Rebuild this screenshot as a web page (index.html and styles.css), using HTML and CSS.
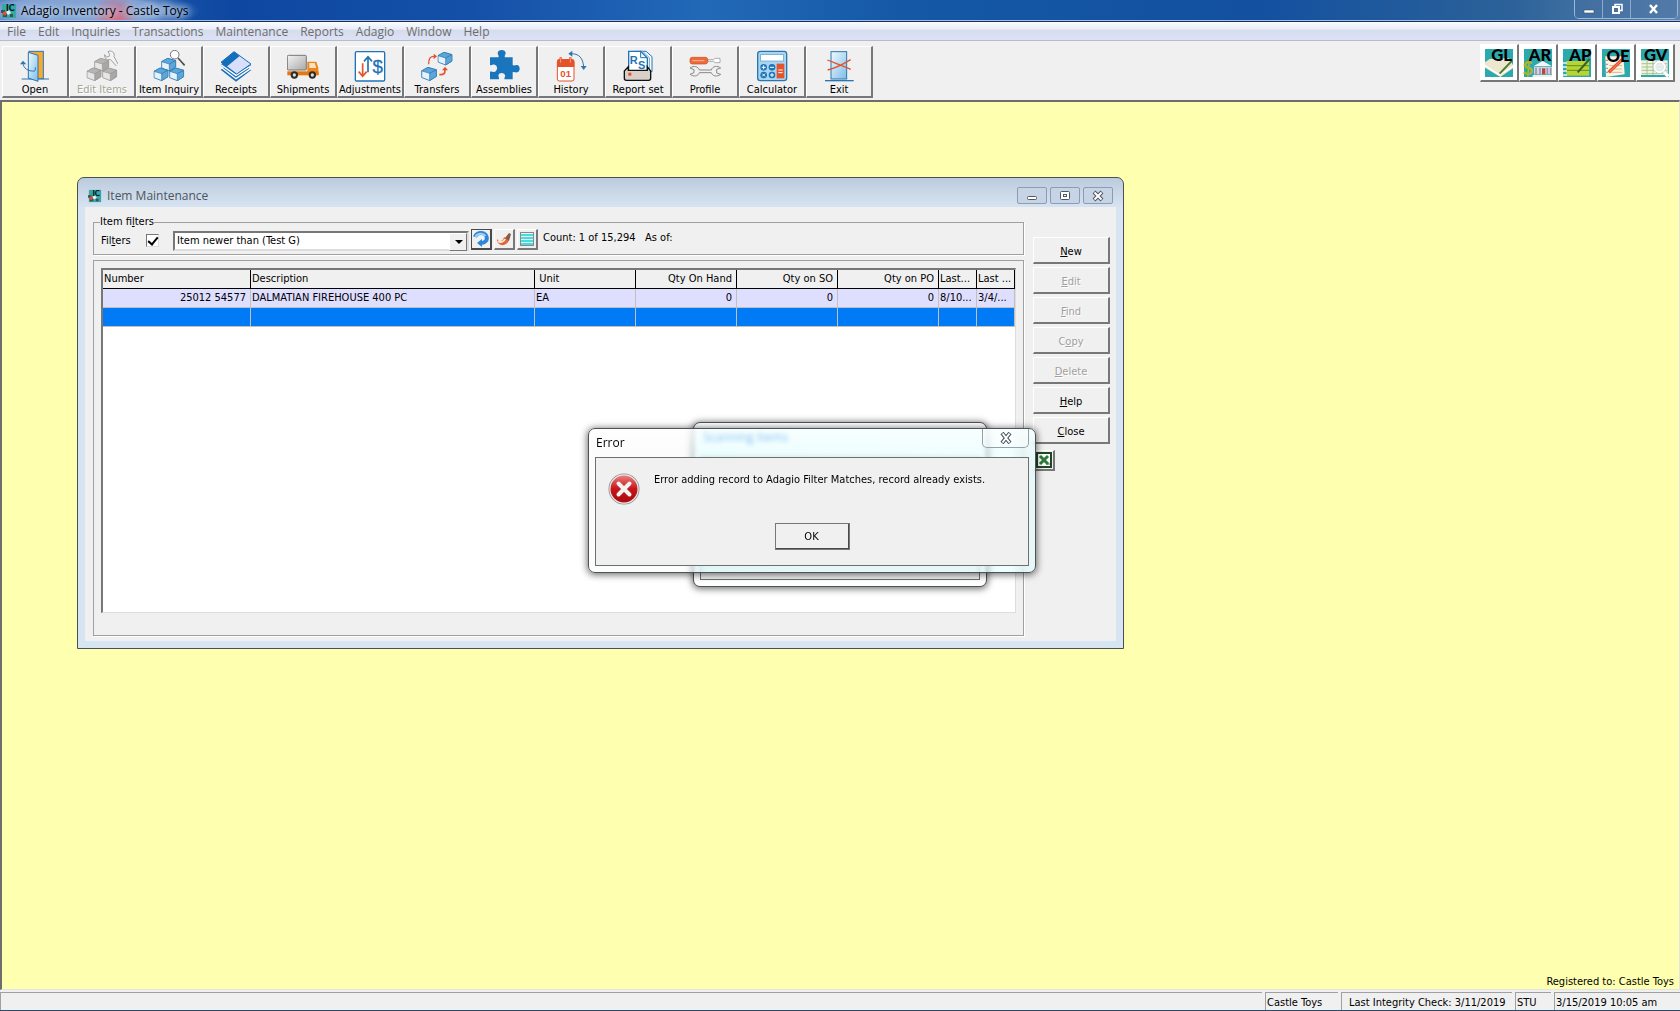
FILE: index.html
```html
<!DOCTYPE html>
<html lang="en">
<head>
    <meta charset="UTF-8">
    <meta name="viewport" content="width=device-width, initial-scale=1.0">
    <title>Adagio Inventory - Castle Toys</title>
    <link rel="stylesheet" href="styles.css">
</head>
<body>
    <!-- shared shapes -->
    <svg class="defs" width="0" height="0" aria-hidden="true">
        <defs>
            <linearGradient id="glass" x1="0" y1="0" x2="1" y2="1">
                <stop offset="0" stop-color="#f2faff"/>
                <stop offset="1" stop-color="#7cbde8"/>
            </linearGradient>
            <linearGradient id="red" x1="0" y1="0" x2="0" y2="1">
                <stop offset="0" stop-color="#e8807c"/>
                <stop offset=".5" stop-color="#c8141a"/>
                <stop offset="1" stop-color="#a80a10"/>
            </linearGradient>
            <linearGradient id="truck" x1="0" y1="0" x2="1" y2="1">
                <stop offset="0" stop-color="#f4f4f4"/>
                <stop offset="1" stop-color="#a8a8a8"/>
            </linearGradient>
            <symbol id="cube" viewBox="0 0 46 42">
                <path d="M2 12 20 2 44 9 44 28 25 40 2 31Z" fill="#e4f2fb" stroke="#2b76b0" stroke-width="2.5" stroke-linejoin="round"/>
                <path d="M2 12 20 2 44 9 25 19Z" fill="#5aa7dc" stroke="#2b76b0" stroke-width="2"/>
                <path d="M25 19 44 9 44 28 25 40Z" fill="#5ea6d8" stroke="#2b76b0" stroke-width="2"/>
            </symbol>
            <symbol id="cube-gray" viewBox="0 0 46 42">
                <path d="M2 12 20 2 44 9 44 28 25 40 2 31Z" fill="#e6e6e6" stroke="#999" stroke-width="2.5" stroke-linejoin="round"/>
                <path d="M2 12 20 2 44 9 25 19Z" fill="#b8b4b2" stroke="#999" stroke-width="2"/>
                <path d="M25 19 44 9 44 28 25 40Z" fill="#aaa6a4" stroke="#999" stroke-width="2"/>
            </symbol>
            <symbol id="ic" viewBox="0 0 16 16">
                <rect x="1" y="1" width="14" height="14" fill="#35a9a6"/>
                <path d="M0 7h4v3H0zM2 11h4v3H2zM9 11h3v3H9z" fill="#3d4f58"/>
                <path d="M5 9l3-2 2 3-3 2z" fill="#e8f4f4"/>
                <circle cx="3.5" cy="10.500" r="2" fill="#d8502f"/>
                <text class="ic-text" x="5" y="8">IC</text>
            </symbol>
        </defs>
    </svg>

    <header class="titlebar">
        <svg class="app-icon" width="16" height="16"><use href="#ic"/></svg>
        <h1 class="titlebar-text">Adagio Inventory - Castle Toys</h1>
        <div class="window-controls">
            <button type="button" aria-label="Minimize"><svg width="14" height="12"><rect x="2" y="7" width="10" height="3" fill="#fff" stroke="#38506e" stroke-width=".6"/></svg></button>
            <button type="button" aria-label="Restore"><svg width="14" height="12"><path d="M5 3V1.500h7v6h-2" fill="none" stroke="#fff" stroke-width="1.500"/><rect x="3" y="4" width="6" height="6" fill="none" stroke="#fff" stroke-width="2"/></svg></button>
            <button type="button" class="wide" aria-label="Close"><svg width="14" height="12"><path d="M3 2l7 8M10 2l-7 8" stroke="#fff" stroke-width="2.400"/></svg></button>
        </div>
    </header>

    <nav class="menubar">
        <button type="button">File</button>
        <button type="button">Edit</button>
        <button type="button">Inquiries</button>
        <button type="button">Transactions</button>
        <button type="button">Maintenance</button>
        <button type="button">Reports</button>
        <button type="button">Adagio</button>
        <button type="button">Window</button>
        <button type="button">Help</button>
    </nav>

    <div class="toolbar">
        <div class="tools">
            <button type="button" class="tool">
                <svg viewBox="0 0 96 96">
                    <path d="M8 87h82" stroke="#2b76b0" stroke-width="3"/>
                    <rect x="30" y="4" width="43" height="82" fill="#f6a935" stroke="#2b76b0" stroke-width="3"/>
                    <path d="M28 7 57 16V94L28 84Z" fill="url(#glass)" stroke="#2b76b0" stroke-width="3"/>
                    <path d="M49 52v9" stroke="#2b76b0" stroke-width="3"/>
                    <path d="M12 37c0 18 15 28 36 26" fill="none" stroke="#2b76b0" stroke-width="3"/>
                    <path d="M3 43 12 32 22 43Z" fill="#2b76b0"/>
                </svg>
                <span>Open</span>
            </button>
            <button type="button" class="tool" disabled>
                <svg viewBox="0 0 96 96">
                    <use href="#cube-gray" x="23" y="23" width="48" height="42"/>
                    <use href="#cube-gray" x="1" y="52" width="46" height="42"/>
                    <use href="#cube-gray" x="48" y="52" width="46" height="42"/>
                    <path d="M66 5c10-6 22 3 18 15l14 25M66 5l5 8-2 7-8 1-5-7c-1 12 8 18 17 14l18 20" fill="#f4f4f4" stroke="#a0a0a0" stroke-width="3"/>
                </svg>
                <span>Edit Items</span>
            </button>
            <button type="button" class="tool">
                <svg viewBox="0 0 96 96">
                    <use href="#cube" x="23" y="23" width="48" height="42"/>
                    <use href="#cube" x="1" y="52" width="46" height="42"/>
                    <use href="#cube" x="48" y="52" width="46" height="42"/>
                    <path d="M75 24l20 22" stroke="#554f4d" stroke-width="5"/>
                    <circle cx="65" cy="14" r="13" fill="#fff" stroke="#777" stroke-width="3"/>
                </svg>
                <span>Item Inquiry</span>
            </button>
            <button type="button" class="tool">
                <svg viewBox="0 0 96 96">
                    <path d="M2 59 46 28 94 60 48 95Z" fill="#1b70b8"/>
                    <path d="M5 53 48 86 93 55" fill="none" stroke="#fff" stroke-width="4"/>
                    <path d="M2 46 44 6 94 48 49 80Z" fill="#1b70b8"/>
                    <path d="M4 45 48 76 92 48" fill="none" stroke="#fff" stroke-width="4"/>
                    <path d="M3 37 42 5 93 42 50 72Z" fill="#d9defb" stroke="#1b70b8" stroke-width="3"/>
                    <path d="M3 37 42 5 59 18 20 50Z" fill="#136fba"/>
                </svg>
                <span>Receipts</span>
            </button>
            <button type="button" class="tool">
                <svg viewBox="0 0 96 96">
                    <rect x="1" y="16" width="57" height="44" rx="3" fill="url(#truck)" stroke="#777" stroke-width="3"/>
                    <path d="M61 35h27l6 18v22H61Z" fill="#ef861c"/>
                    <path d="M67 39h16l5 15H67Z" fill="#f7e3c3"/>
                    <path d="M1 64h94v12H1Z" fill="#e3780c"/>
                    <circle cx="22" cy="75" r="11" fill="#2b2b2b"/><circle cx="22" cy="75" r="5" fill="#ddd"/>
                    <circle cx="76" cy="75" r="11" fill="#2b2b2b"/><circle cx="76" cy="75" r="5" fill="#ddd"/>
                </svg>
                <span>Shipments</span>
            </button>
            <button type="button" class="tool">
                <svg viewBox="0 0 96 96">
                    <rect x="4" y="5" width="88" height="88" rx="4" fill="#fff" stroke="#1d74b8" stroke-width="4"/>
                    <path d="M42 67V22M30 34 42 20 54 34" fill="none" stroke="#1d74b8" stroke-width="5"/>
                    <path d="M26 40v38M14 65 26 79 38 65" fill="none" stroke="#e4532b" stroke-width="5"/>
                    <text x="71" y="69" font-size="56" text-anchor="middle" fill="#1d74b8" stroke="#1d74b8" stroke-width="1">$</text>
                </svg>
                <span>Adjustments</span>
            </button>
            <button type="button" class="tool">
                <svg viewBox="0 0 96 96">
                    <use href="#cube" x="49" y="3" width="46" height="46"/>
                    <use href="#cube" x="0" y="49" width="48" height="46"/>
                    <path d="M55 74c15 1 17-4 17-15" fill="none" stroke="#e4532b" stroke-width="5"/>
                    <path d="M63 61 72 50 81 61Z" fill="#e4532b"/>
                    <path d="M23 43c0-19 5-24 17-24" fill="none" stroke="#e4532b" stroke-width="4"/>
                    <path d="M38 11 48 19 38 28Z" fill="#e4532b"/>
                </svg>
                <span>Transfers</span>
            </button>
            <button type="button" class="tool">
                <svg viewBox="0 0 96 96">
                    <path d="M6 22h25c3-4-2-8-2-12 0-13 24-13 24 0 0 4-5 8-2 12h23v23c6 4 10-3 16 1 8 6 6 19-3 21-6 1-8-3-13 0v21H50c-3-4 3-7 1-13-3-9-19-8-20 1 0 5 4 8 1 12H6V65c6-3 9 3 15 0 9-5 8-19-1-21-6-1-9 4-14 1Z" fill="#1b75bc"/>
                </svg>
                <span>Assemblies</span>
            </button>
            <button type="button" class="tool">
                <svg viewBox="0 0 96 96">
                    <rect x="7" y="30" width="50" height="63" rx="6" fill="#fff" stroke="#e4532b" stroke-width="3"/>
                    <path d="M6 51V34q0-7 7-7h38q7 0 7 7v17Z" fill="#e4532b"/>
                    <path d="M17 22v15M46 22v15" stroke="#e4532b" stroke-width="7"/>
                    <path d="M17 24v14M46 24v14" stroke="#f9c6b5" stroke-width="2"/>
                    <text x="32" y="82" font-size="29" font-weight="700" text-anchor="middle" fill="#e4532b">01</text>
                    <path d="M46 11c26-1 38 13 40 40" fill="none" stroke="#2b76b0" stroke-width="3"/>
                    <path d="M52 2 40 11 52 20ZM77 48h18L86 60Z" fill="#2b76b0"/>
                </svg>
                <span>History</span>
            </button>
            <button type="button" class="tool">
                <svg viewBox="0 0 96 96">
                    <path d="M54 4h18l18 16v45H54Z" fill="#fff" stroke="#1d74b8" stroke-width="3"/>
                    <path d="M34 4h28l20 19v45H34Z" fill="#fff" stroke="#1d74b8" stroke-width="2"/>
                    <path d="M20 4h36l20 20v40H20Z" fill="#fff" stroke="#1d74b8" stroke-width="4"/>
                    <path d="M56 5v18h19" fill="none" stroke="#1d74b8" stroke-width="3"/>
                    <path d="M19 50 7 63v22q0 6 6 6h67q6 0 6-6V63L76 50v11H19Z" fill="#d8cfc8" stroke="#111" stroke-width="4"/>
                    <text x="23" y="43" font-size="33" font-weight="700" fill="#1d74b8">R</text>
                    <text x="48" y="57" font-size="33" font-weight="700" fill="#1d74b8">S</text>
                    <rect x="19" y="68" width="9" height="9" fill="#e4532b"/>
                </svg>
                <span>Report set</span>
            </button>
            <button type="button" class="tool">
                <svg viewBox="0 0 96 96">
                    <path d="M56 29h18l4-4h15v13H78l-4-4H56Z" fill="#fff" stroke="#888" stroke-width="2"/>
                    <rect x="3" y="22" width="53" height="20" rx="7" fill="#ef6a3a" stroke="#c94b1d" stroke-width="2"/>
                    <path d="M10 32h36" stroke="#f9b698" stroke-width="3"/>
                    <path d="M3 54c12-8 24-5 28 6h36c4-12 18-14 28-6l-12 4v11l12 4c-12 9-25 5-28-5H31c-4 11-17 13-28 5l12-5V59Z" fill="#f1f1f1" stroke="#888" stroke-width="3"/>
                </svg>
                <span>Profile</span>
            </button>
            <button type="button" class="tool">
                <svg viewBox="0 0 96 96">
                    <rect x="5" y="4" width="87" height="88" rx="8" fill="#a8d5ef" stroke="#2b76b0" stroke-width="4"/>
                    <rect x="14" y="14" width="68" height="19" fill="#fff" stroke="#5c9cc8" stroke-width="2"/>
                    <g fill="#1d74b8"><circle cx="23" cy="52" r="10"/><circle cx="48" cy="52" r="10"/><circle cx="23" cy="75" r="10"/><circle cx="48" cy="75" r="10"/></g>
                    <path d="M17 52h12M23 46v12M42 52h12M19 71l8 8M27 71l-8 8M42 75h12M48 69v12" stroke="#fff" stroke-width="3"/>
                    <rect x="62" y="41" width="23" height="44" fill="#e4532b"/>
                    <path d="M67 60h13M67 68h13" stroke="#fff" stroke-width="3"/>
                </svg>
                <span>Calculator</span>
            </button>
            <button type="button" class="tool">
                <svg viewBox="0 0 96 96">
                    <path d="M6 92h86" stroke="#2b76b0" stroke-width="4"/>
                    <rect x="24" y="5" width="47" height="82" fill="url(#glass)" stroke="#2b76b0" stroke-width="3"/>
                    <path d="M13 30c20 8 44 16 70 28M14 60c22-5 46-17 69-31" fill="none" stroke="#e4532b" stroke-width="4"/>
                </svg>
                <span>Exit</span>
            </button>
        </div>
        <div class="modules">
            <button type="button" class="module" aria-label="General Ledger">
                <svg viewBox="0 0 84 84">
                    <rect width="84" height="84" fill="#2ba9ad"/>
                    <path d="M0 40 14 30 72 28 84 48V58L46 84 0 56Z" fill="#ece8cf"/>
                    <path d="M0 50 44 78 84 52" fill="none" stroke="#fff" stroke-width="4"/>
                    <path d="M44 74 82 34" stroke="#4b7a2c" stroke-width="6"/>
                    <text x="50" y="36" text-anchor="middle">GL</text>
                </svg>
            </button>
            <button type="button" class="module" aria-label="Accounts Receivable">
                <svg viewBox="0 0 84 84">
                    <rect width="84" height="84" fill="#2ba9ad"/>
                    <path d="M28 52 56 36 84 52Z" fill="#f4f4f6"/>
                    <path d="M30 76V54h54v22Z" fill="#d6d4de"/>
                    <path d="M36 56v20M48 56v20M70 56v20M80 56v20" stroke="#9b93b4" stroke-width="5"/>
                    <path d="M54 58h10v18H54Z" fill="#b5483c"/>
                    <path d="M26 78h58v6H26Z" fill="#eee"/>
                    <text class="dollar" x="12" y="78" text-anchor="middle">$</text>
                    <text x="48" y="36" text-anchor="middle">AR</text>
                </svg>
            </button>
            <button type="button" class="module" aria-label="Accounts Payable">
                <svg viewBox="0 0 84 84">
                    <rect width="84" height="84" fill="#2ba9ad"/>
                    <rect x="10" y="36" width="68" height="44" fill="#b7d433"/>
                    <path d="M10 50h68M10 64h68" stroke="#6d9b24" stroke-width="4"/>
                    <path d="M0 42h12M0 54h12M0 66h12M0 78h12" stroke="#e8f6f6" stroke-width="4"/>
                    <path d="M44 70 80 30" stroke="#3f5d26" stroke-width="6"/>
                    <text x="52" y="36" text-anchor="middle">AP</text>
                </svg>
            </button>
            <button type="button" class="module" aria-label="Order Entry">
                <svg viewBox="0 0 84 84">
                    <rect width="84" height="84" fill="#2ba9ad"/>
                    <path d="M10 22h54l4 54-56 8Z" fill="#fbf4e6"/>
                    <path d="M22 50h38M22 60h38M22 70h38" stroke="#e3b48f" stroke-width="3"/>
                    <path d="M8 34h10M8 46h10M8 58h10M8 70h10" stroke="#8fa6ac" stroke-width="4"/>
                    <path d="M20 70 60 32" stroke="#e2512b" stroke-width="10"/>
                    <path d="M24 67 58 34" stroke="#f8b59f" stroke-width="2"/>
                    <text x="48" y="38" text-anchor="middle">OE</text>
                </svg>
            </button>
            <button type="button" class="module" aria-label="GridView">
                <svg viewBox="0 0 84 84">
                    <rect width="84" height="84" fill="#2ba9ad"/>
                    <path d="M0 34h80v44H0Z" fill="#eef3e2"/>
                    <path d="M2 44h76M2 54h76M2 64h76M2 74h76M18 36v42M36 36v42" stroke="#a9c48c" stroke-width="3"/>
                    <path d="M68 68 82 82" stroke="#d4d8da" stroke-width="12"/>
                    <path d="M68 68 82 82" stroke="#fff" stroke-width="8"/>
                    <circle cx="56" cy="54" r="19" fill="none" stroke="#bcc4c8" stroke-width="3"/>
                    <circle cx="56" cy="54" r="16" fill="#e6edf2" fill-opacity=".85" stroke="#fff" stroke-width="5"/>
                    <text x="44" y="36" text-anchor="middle">GV</text>
                </svg>
            </button>
        </div>
    </div>

    <main class="workspace">
        <section class="window item-window">
            <div class="window-title">
                <svg width="14" height="14"><use href="#ic"/></svg>
                <h2>Item Maintenance</h2>
                <div class="window-buttons">
                    <button type="button" aria-label="Minimize"><svg width="14" height="12"><rect x="2.500" y="6.500" width="9" height="3" rx="1" fill="#fff" stroke="#4c5864"/></svg></button>
                    <button type="button" aria-label="Maximize"><svg width="14" height="12"><rect x="2.500" y="1.500" width="9" height="8" rx="1" fill="#fff" stroke="#4c5864"/><rect x="5.500" y="4.500" width="3" height="2" fill="#fff" stroke="#4c5864"/></svg></button>
                    <button type="button" aria-label="Close"><svg width="14" height="12"><path d="M3 2l8 8M11 2l-8 8" stroke="#4c5864" stroke-width="4"/><path d="M3.500 2.500l7 7M10.500 2.500l-7 7" stroke="#fff" stroke-width="2"/></svg></button>
                </div>
            </div>
            <div class="window-body">
                <div class="panels">
                    <fieldset class="filters">
                        <legend>Item fi<u>l</u>ters</legend>
                        <div class="filter-row">
                            <label for="use-filters">Fil<u>t</u>ers</label>
                            <input type="checkbox" id="use-filters" checked>
                            <div class="combo">
                                <select aria-label="Filter">
                                    <option>Item newer than (Test G)</option>
                                </select>
                            </div>
                            <button type="button" class="mini focused" aria-label="Refresh"><svg width="16" height="16"><path d="M2 6a6 5 0 1 1 7 6" fill="none" stroke="#2b86d8" stroke-width="4"/><path d="M2.500 6a5.500 4.500 0 0 1 10-1" fill="none" stroke="#9bd2f8" stroke-width="2"/><path d="M9 8v8l-5-4z" fill="#2b86d8"/></svg></button>
                            <button type="button" class="mini" aria-label="Clear filter"><svg width="16" height="16"><path d="M1 8c0 8 10 8 12 1L8 6c-1 5-5 5-7 2z" fill="#e0673c"/><path d="M2 10c2 2 6 1 7-2" stroke="#fbe3d6" stroke-width="2" fill="none"/><path d="M9 7l4-5 2 1-2 7z" fill="#8a5a44"/></svg></button>
                            <button type="button" class="mini" aria-label="Select all"><svg width="16" height="16"><path d="M2 4h12M2 7h12M2 10h12M2 13h12" stroke="#43dfe0" stroke-width="2"/><rect x="1.500" y="1.500" width="13" height="13" fill="none" stroke="#222" stroke-dasharray="1 1"/></svg></button>
                            <span class="count">Count: 1 of 15,294 &nbsp; As of:</span>
                        </div>
                    </fieldset>
                    <div class="grid-panel">
                        <div class="grid">
                            <table>
                                <colgroup>
                                    <col class="col-number">
                                    <col>
                                    <col class="col-qty">
                                    <col class="col-qty">
                                    <col class="col-qty">
                                    <col class="col-qty">
                                    <col class="col-last">
                                    <col class="col-last">
                                </colgroup>
                                <thead>
                                    <tr>
                                        <th>Number</th>
                                        <th>Description</th>
                                        <th>&nbsp;Unit</th>
                                        <th class="num">Qty On Hand</th>
                                        <th class="num">Qty on SO</th>
                                        <th class="num">Qty on PO</th>
                                        <th>Last...</th>
                                        <th>Last ...</th>
                                    </tr>
                                </thead>
                                <tbody>
                                    <tr>
                                        <td class="num">25012 54577</td>
                                        <td>DALMATIAN FIREHOUSE 400 PC</td>
                                        <td>EA</td>
                                        <td class="num">0</td>
                                        <td class="num">0</td>
                                        <td class="num">0</td>
                                        <td>8/10...</td>
                                        <td>3/4/...</td>
                                    </tr>
                                    <tr class="selected">
                                        <td></td><td></td><td></td><td></td><td></td><td></td><td></td><td></td>
                                    </tr>
                                </tbody>
                            </table>
                        </div>
                    </div>
                </div>
                <div class="actions">
                    <button type="button"><u>N</u>ew</button>
                    <button type="button" disabled><u>E</u>dit</button>
                    <button type="button" disabled><u>F</u>ind</button>
                    <button type="button" disabled>C<u>o</u>py</button>
                    <button type="button" disabled><u>D</u>elete</button>
                    <button type="button"><u>H</u>elp</button>
                    <button type="button"><u>C</u>lose</button>
                    <button type="button" class="mini excel" aria-label="Export to Excel"><svg width="16" height="16"><rect x="1" y="1" width="14" height="14" fill="#fff" stroke="#1d4a24" stroke-width="2"/><path d="M4 4l8 8M12 4l-8 8" stroke="#2f7a3c" stroke-width="3"/><path d="M10 12h4" stroke="#2f7a3c"/></svg></button>
                </div>
            </div>
        </section>

        <section class="dialog scan-dialog">
            <div class="scan-title">Scanning Items</div>
            <div class="dialog-body"></div>
        </section>

        <section class="dialog error-dialog" role="alertdialog" aria-labelledby="error-title">
            <div class="dialog-title">
                <h2 id="error-title">Error</h2>
                <button type="button" class="dialog-close" aria-label="Close"><svg width="14" height="12"><path d="M3 1l8 10M11 1l-8 10" stroke="#4c5560" stroke-width="4"/><path d="M3.500 1.500l7 9M10.500 1.500l-7 9" stroke="#fff" stroke-width="2"/></svg></button>
            </div>
            <div class="dialog-body">
                <div class="message">
                    <svg width="32" height="32" viewBox="0 0 32 32">
                        <circle cx="16" cy="16" r="15.500" fill="#8d8d8d"/>
                        <circle cx="16" cy="16" r="14.700" fill="#f0e8e8"/>
                        <circle cx="16" cy="16" r="13.500" fill="url(#red)"/>
                        <path d="M10.500 10.500l11 11M21.500 10.500l-11 11" stroke="#f2f2f2" stroke-width="4" stroke-linecap="round"/>
                    </svg>
                    <p>Error adding record to Adagio Filter Matches, record already exists.</p>
                </div>
                <button type="button" class="ok">OK</button>
            </div>
        </section>

        <p class="registered">Registered to: Castle Toys</p>
    </main>

    <footer class="statusbar">
        <span class="fill"></span>
        <span class="status-company">Castle Toys</span>
        <span class="status-check">Last Integrity Check: 3/11/2019</span>
        <span class="status-user">STU</span>
        <span class="status-time">3/15/2019 10:05 am</span>
    </footer>
</body>
</html>
```

FILE: styles.css
```css
* {
    box-sizing: border-box;
}
body {
    margin: 0;
    height: 100vh;
    display: flex;
    flex-direction: column;
    overflow: hidden;
    background: #f0f0f0;
    color: #000;
    font-family: "DejaVu Sans Condensed", "Noto Sans", sans-serif;
    font-size: 11px;
    line-height: 14px;
}
button, select, input {
    font: inherit;
    color: inherit;
    margin: 0;
    padding: 0;
}
h1, h2, p {
    margin: 0;
    font-size: 12px;
    font-weight: normal;
}
svg {
    display: block;
    flex: none;
}
.defs {
    position: absolute;
}
.ic-text {
    font: 900 9px Lato, sans-serif;
    fill: #0a1418;
}

/* main title bar */
.titlebar {
    flex: none;
    height: 22px;
    display: flex;
    align-items: center;
    gap: 4px;
    padding-left: 1px;
    border-bottom: 1px solid #17305c;
    box-shadow: inset 0 -1px #9fbce4;
    background:
        radial-gradient(circle at 115px 18px, rgba(232, 96, 112, 0.9), rgba(232, 96, 112, 0) 24px),
        radial-gradient(ellipse 120px 22px at 80px 11px, rgba(140, 170, 215, 0.9) 65%, rgba(140, 170, 215, 0)),
        linear-gradient(to right, #2a66b0, #0d47a1 14%, #1550a8 28%, #2269b8 42%, #1458a6 54%, #1350a0 75%, #2c6299 90%, #5b83ae);
}
.titlebar-text {
    flex: 1;
    font-family: "Open Sans", sans-serif;
    text-shadow: 0 0 6px #cfe0f6, 0 0 6px #cfe0f6;
}
.window-controls {
    align-self: flex-start;
    height: 19px;
    margin-right: 2px;
    display: flex;
    border: 1px solid #9fb6d2;
    border-top: 0;
    border-radius: 0 0 5px 5px;
}
.window-controls button {
    width: 28px;
    display: flex;
    align-items: center;
    justify-content: center;
    border: 0;
    border-right: 1px solid #8fa9c8;
    background: rgba(70, 110, 160, 0.4);
}
.window-controls .wide {
    width: 46px;
    border-right: 0;
}

/* menu */
.menubar {
    flex: none;
    height: 19px;
    display: flex;
    gap: 12px;
    padding: 2px 0 0 7px;
    border-bottom: 1px solid #b4bccf;
    background: linear-gradient(#fbfcfe, #e9edf7 40%, #d5dcee 45%, #dde3f4);
}
.menubar button {
    border: 0;
    background: none;
    color: #6d6d6d;
    font-family: "Open Sans", sans-serif;
    font-size: 12px;
}

/* toolbar */
.toolbar {
    flex: none;
    height: 59px;
    display: flex;
    justify-content: space-between;
    padding: 3px 5px 0 2px;
}
.tools {
    display: flex;
    padding-top: 2px;
}
.tool {
    width: 67px;
    height: 52px;
    display: flex;
    flex-direction: column;
    align-items: center;
    justify-content: flex-end;
    border: 1px solid #fff;
    border-right: 2px solid #777;
    border-bottom: 2px solid #777;
    background: #f0f0f0;
    white-space: nowrap;
}
.tool svg {
    width: 32px;
    height: 32px;
}
.tool span {
    padding-top: 2px;
    line-height: 12px;
}
.tool text {
    font-family: "Liberation Sans", sans-serif;
}
.tool:disabled {
    color: #a8a49a;
    text-shadow: 1px 1px #fff;
}
.modules {
    display: flex;
}
.module {
    width: 39px;
    height: 38px;
    padding: 0 4px;
    border: 1px solid #fff;
    border-right: 2px solid #777;
    border-bottom: 2px solid #777;
    background: #fff;
}
.module svg {
    width: 28px;
    height: 28px;
    overflow: visible;
}
.module text {
    font: 900 50px Lato, sans-serif;
}
.module .dollar {
    font-size: 54px;
    fill: #a8b52a;
}

/* desktop area */
.workspace {
    flex: 1;
    position: relative;
    border: 1px solid #e3e3e3;
    border-top: 2px solid #6d6d6d;
    border-left: 2px solid #6d6d6d;
    background: #ffffb0;
}
.registered {
    position: absolute;
    right: 5px;
    bottom: 0;
    font-size: 11px;
}

/* item maintenance window */
.window {
    position: absolute;
    border: 1px solid #4a4f57;
    border-radius: 7px 7px 0 0;
    background: linear-gradient(#bccbdd, #d7e4f2 30px);
    padding: 0 7px 7px;
}
.item-window {
    left: 75px;
    top: 75px;
    width: 1047px;
    height: 472px;
    display: flex;
    flex-direction: column;
}
.window-title {
    height: 29px;
    display: flex;
    align-items: center;
    gap: 5px;
    padding: 6px 3px 0;
}
.window-title h2 {
    flex: 1;
    color: #4d5560;
    font-family: "Open Sans", sans-serif;
}
.window-buttons {
    display: flex;
    gap: 3px;
}
.window-buttons button {
    width: 30px;
    height: 17px;
    display: flex;
    align-items: center;
    justify-content: center;
    border: 1px solid #8b9cb4;
    border-radius: 2px;
    background: #c6d4e5;
}
.window-body {
    flex: 1;
    display: flex;
    gap: 9px;
    padding: 8px 6px 5px 8px;
    background: #f0f0f0;
}
.panels {
    flex: 1;
    display: flex;
    flex-direction: column;
    gap: 5px;
}
fieldset {
    margin: 0;
    padding: 0 7px 2px;
    border: 1px solid #a0a0a0;
    box-shadow: 1px 1px #fff;
}
legend {
    padding: 0;
    margin-left: -1px;
}
.filter-row {
    display: flex;
    align-items: center;
    gap: 2px;
}
.filter-row label {
    width: 43px;
    padding-top: 1px;
}
.filter-row input {
    appearance: none;
    width: 13px;
    height: 13px;
    margin: 0 12px 0 0;
    border: 1px solid #777;
    border-right-color: #ddd;
    border-bottom-color: #ddd;
    background: #fff;
    position: relative;
}
.filter-row input:checked::after {
    content: "";
    position: absolute;
    left: 3px;
    top: 0;
    width: 4px;
    height: 8px;
    border: solid #000;
    border-width: 0 2px 2px 0;
    transform: rotate(40deg);
}
.combo {
    position: relative;
    width: 296px;
    height: 20px;
    border: 2px solid #777;
    border-right-color: #ddd;
    border-bottom-color: #ddd;
    background: #fff;
}
.combo select {
    appearance: none;
    width: 100%;
    height: 16px;
    padding-left: 2px;
    border: 0;
    background: none;
}
/* drop-down arrow */
.combo::before {
    content: "";
    position: absolute;
    right: 0;
    top: 0;
    width: 16px;
    height: 16px;
    border: 1px solid #fff;
    border-right-color: #777;
    border-bottom-color: #777;
    background: #f0f0f0;
}
.combo::after {
    content: "";
    position: absolute;
    right: 4px;
    top: 7px;
    border: 4px solid transparent;
    border-top-color: #000;
    border-bottom: 0;
}
.mini {
    width: 21px;
    height: 21px;
    display: flex;
    align-items: center;
    justify-content: center;
    border: 1px solid #fff;
    border-right: 2px solid #777;
    border-bottom: 2px solid #777;
    background: #f0f0f0;
}
.mini.focused {
    border-color: #4a4a4a;
}
.filter-row .mini {
    margin-bottom: 2px;
}
.count {
    margin: 0 0 6px 3px;
}
.grid-panel {
    flex: 1;
    display: flex;
    padding: 7px 7px 22px;
    border: 1px solid #a0a0a0;
    box-shadow: 1px 1px #fff;
}
.grid {
    flex: 1;
    border: 2px solid #777;
    border-right: 1px solid #ddd;
    border-bottom: 1px solid #ddd;
    background: #fff;
}
table {
    width: 100%;
    table-layout: fixed;
    border-collapse: separate;
    border-spacing: 0;
}
.col-number {
    width: 148px;
}
.col-qty {
    width: 101px;
}
.col-last {
    width: 38px;
}
th, td {
    height: 19px;
    padding: 0 1px;
    overflow: hidden;
    white-space: nowrap;
    font-weight: normal;
    text-align: left;
}
th {
    border-right: 1px solid #000;
    border-bottom: 1px solid #000;
    background: #f0f0f0;
}
td {
    border-right: 1px solid #c0c0c0;
    border-bottom: 1px solid #c0c0c0;
    background: #dedeff;
}
.selected td {
    background: #007af5;
}
.num {
    padding-right: 4px;
    text-align: right;
}
.actions {
    padding-top: 22px;
    display: flex;
    flex-direction: column;
    gap: 3px;
}
.actions button:not(.mini), .ok {
    width: 77px;
    height: 27px;
    padding-top: 3px;
    border: 1px solid #fff;
    border-right: 2px solid #777;
    border-bottom: 2px solid #777;
    background: #f0f0f0;
}
.actions button:disabled {
    color: #a0a0a0;
    text-shadow: 1px 1px #fff;
}
.excel {
    margin: 3px 0 0 1px;
}

/* dialogs */
.dialog {
    position: absolute;
    border: 1px solid #4c5459;
    border-radius: 7px;
    box-shadow: 0 1px 7px 1px rgba(0, 0, 0, 0.55);
    padding: 0 6px 6px;
    display: flex;
    flex-direction: column;
}
.dialog-body {
    flex: 1;
    border: 1px solid #6c7070;
    background: #f0f0f0;
}
.scan-dialog {
    left: 691px;
    top: 320px;
    width: 294px;
    height: 165px;
    background: #fff;
}
.scan-title {
    height: 34px;
    padding: 6px 0 0 3px;
    color: #0068e0;
    font: 12px/16px "Open Sans", sans-serif;
    text-shadow: 0 0 3px #5ab0ff;
}
.error-dialog {
    left: 586px;
    top: 326px;
    width: 448px;
    height: 145px;
    background:
        linear-gradient(rgba(255, 255, 255, 0.6), rgba(255, 255, 255, 0) 30px),
        linear-gradient(to right, rgba(250, 250, 250, 0.5) 100px, rgba(214, 252, 253, 0.5) 110px, rgba(222, 254, 255, 0.5));
    backdrop-filter: blur(2px);
}
.dialog-title {
    height: 28px;
    display: flex;
    justify-content: space-between;
}
.dialog-title h2 {
    padding: 7px 0 0 1px;
    font-family: "Open Sans", sans-serif;
}
.dialog-close {
    width: 47px;
    height: 19px;
    display: flex;
    align-items: center;
    justify-content: center;
    border: 1px solid #8fa3ac;
    border-top: 0;
    border-radius: 0 0 5px 5px;
    background: rgba(255, 255, 255, 0.4);
}
.error-dialog .dialog-body {
    display: flex;
    flex-direction: column;
    justify-content: space-between;
    align-items: center;
    padding: 15px 12px;
}
.message {
    align-self: stretch;
    display: flex;
    gap: 14px;
}
.message p {
    font-size: 11px;
}
.actions ~ .ok, .dialog-body .ok {
    width: 75px;
    padding-top: 1px;
    border-color: #4a4a4a;
    outline: 1px solid #777;
    outline-offset: -1px;
}

/* status bar */
.statusbar {
    flex: none;
    height: 21px;
    display: flex;
    gap: 3px;
    padding-top: 2px;
    border-bottom: 1px solid #2c4a66;
}
.statusbar span {
    padding: 3px 1px 0;
    border-top: 1px solid #a0a0a0;
    border-left: 1px solid #a0a0a0;
    white-space: nowrap;
}
.statusbar .fill {
    flex: 1;
}
.statusbar .status-company {
    width: 73px;
}
.statusbar .status-check {
    width: 171px;
    padding-left: 7px;
}
.statusbar .status-user {
    width: 36px;
}
.statusbar .status-time {
    width: 126px;
}
```
